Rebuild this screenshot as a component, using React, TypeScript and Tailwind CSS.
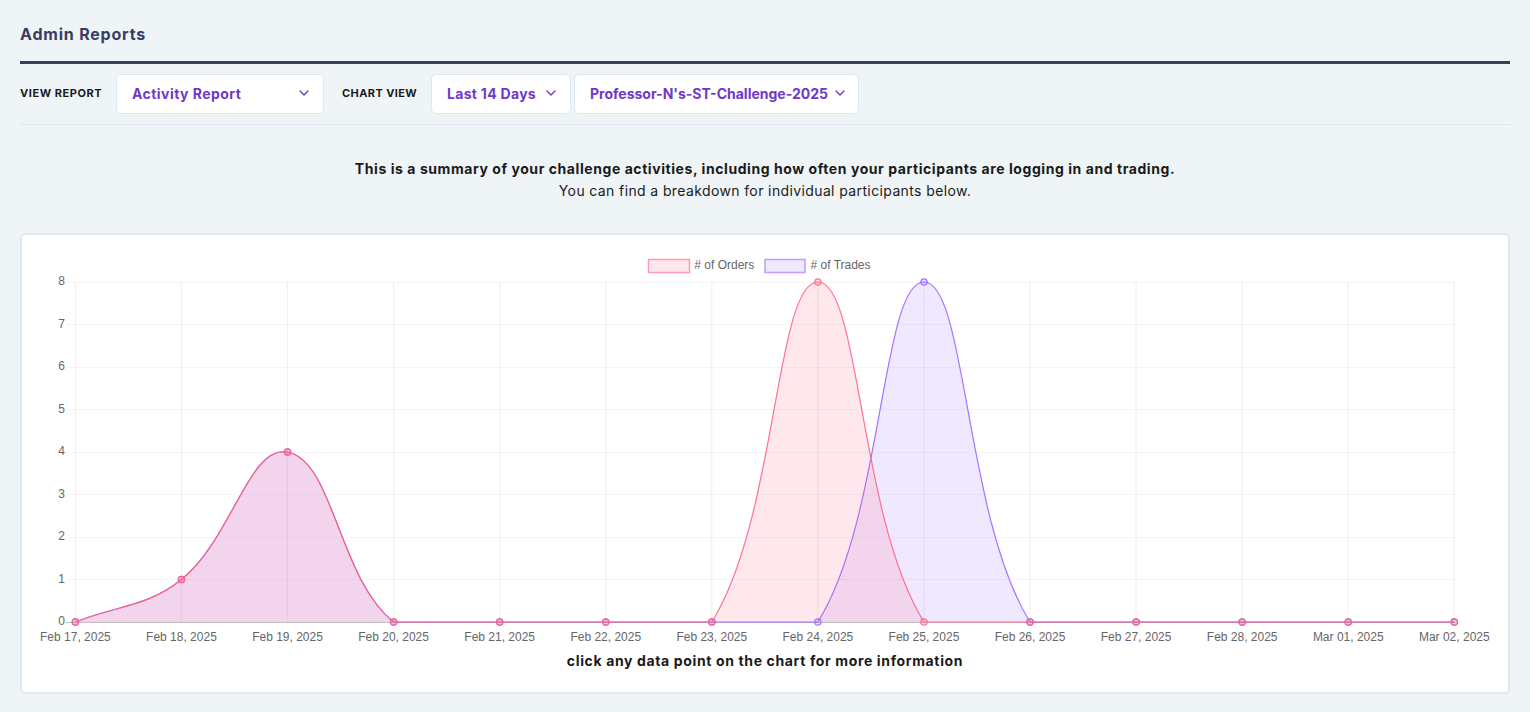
import React from 'react';
import { ChevronDown } from 'lucide-react';

const labels = [
  'Feb 17, 2025', 'Feb 18, 2025', 'Feb 19, 2025', 'Feb 20, 2025', 'Feb 21, 2025', 'Feb 22, 2025', 'Feb 23, 2025',
  'Feb 24, 2025', 'Feb 25, 2025', 'Feb 26, 2025', 'Feb 27, 2025', 'Feb 28, 2025', 'Mar 01, 2025', 'Mar 02, 2025',
];
const orders = [0, 1, 4, 0, 0, 0, 0, 8, 0, 0, 0, 0, 0, 0];
const trades = [0, 1, 4, 0, 0, 0, 0, 0, 8, 0, 0, 0, 0, 0];

const X0 = 75.4;
const STEP = 106.07;
const Y0 = 622;
const UNIT = 42.5;
const xAt = (i: number) => X0 + i * STEP;
const yAt = (v: number) => Y0 - v * UNIT;

// same spline the chart library uses (tension 0.4, control points capped to the plot area)
function linePath(data: number[]) {
  const pts = data.map((v, i) => ({ x: xAt(i), y: yAt(v) }));
  const cap = (n: number) => Math.min(Y0, Math.max(yAt(8), n));
  const ctrl = pts.map((p, i) => {
    const a = pts[i - 1] || p;
    const b = pts[i + 1] || p;
    const d01 = Math.hypot(p.x - a.x, p.y - a.y);
    const d12 = Math.hypot(b.x - p.x, b.y - p.y);
    const total = d01 + d12 || 1;
    const fa = (0.4 * d01) / total;
    const fb = (0.4 * d12) / total;
    return {
      px: p.x - fa * (b.x - a.x),
      py: cap(p.y - fa * (b.y - a.y)),
      nx: p.x + fb * (b.x - a.x),
      ny: cap(p.y + fb * (b.y - a.y)),
    };
  });
  let d = `M${pts[0].x} ${pts[0].y}`;
  for (let i = 1; i < pts.length; i++) {
    d += ` C${ctrl[i - 1].nx} ${ctrl[i - 1].ny} ${ctrl[i].px} ${ctrl[i].py} ${pts[i].x} ${pts[i].y}`;
  }
  return d;
}

function Series({ data, rgb }: { data: number[]; rgb: string }) {
  const d = linePath(data);
  return (
    <g>
      <path d={`${d} L${xAt(13)} ${Y0} L${xAt(0)} ${Y0} Z`} fill={`rgba(${rgb},0.15)`} />
      <path d={d} fill="none" stroke={`rgba(${rgb},0.9)`} strokeWidth={1.2} />
      {data.map((v, i) => (
        <circle key={i} cx={xAt(i)} cy={yAt(v)} r={3.2} fill={`rgba(${rgb},0.2)`} stroke={`rgba(${rgb},0.9)`} strokeWidth={1.2} />
      ))}
    </g>
  );
}

function Chart() {
  const ticks = [0, 1, 2, 3, 4, 5, 6, 7, 8];
  return (
    <svg viewBox="22 235 1486 410" className="block h-[410px] w-[1486px]" style={{ fontFamily: '"Liberation Sans", Arial, sans-serif' }}>
      <rect x={648.5} y={259.5} width={41} height={13} fill="rgba(255,99,132,0.15)" stroke="rgba(255,99,132,0.6)" strokeWidth={1.5} />
      <text x={694.3} y={269} fontSize={12} fill="#666">
        # of Orders
      </text>
      <rect x={765} y={259.5} width={40} height={13} fill="rgba(153,102,255,0.15)" stroke="rgba(153,102,255,0.6)" strokeWidth={1.5} />
      <text x={810.5} y={269} fontSize={12} fill="#666">
        # of Trades
      </text>

      {ticks.map((t) => (
        <g key={t}>
          <line x1={66} x2={1455} y1={Math.floor(yAt(t)) + 0.5} y2={Math.floor(yAt(t)) + 0.5} stroke={t === 0 ? 'rgba(0,0,0,0.25)' : 'rgba(0,0,0,0.04)'} />
          <text x={65} y={yAt(t) + 3} fontSize={12} fill="#666" textAnchor="end">
            {t}
          </text>
        </g>
      ))}
      {labels.map((l, i) => (
        <g key={l}>
          <line x1={xAt(i)} x2={xAt(i)} y1={yAt(8)} y2={Y0} stroke="rgba(0,0,0,0.06)" strokeWidth={1.2} />
          <text x={xAt(i)} y={641} fontSize={12} fill="#666" textAnchor="middle">
            {l}
          </text>
        </g>
      ))}

      <Series data={trades} rgb="153,102,255" />
      <Series data={orders} rgb="255,99,132" />
    </svg>
  );
}

function Select({ label, className }: { label: string; className: string }) {
  return (
    <div className={`flex h-10 items-center justify-between rounded-[5px] border border-[#dfe6f5] bg-white pb-[1px] text-[14px] font-bold text-[#6f38c9] ${className}`}>
      <span className="whitespace-nowrap">{label}</span>
      <ChevronDown size={16} strokeWidth={2} />
    </div>
  );
}

export default function App() {
  return (
    <div className="h-[712px] overflow-hidden bg-[#eff4f7] px-5" style={{ fontFamily: 'Inter, sans-serif' }}>
      <h1 className="pt-6 pb-[16px] text-[16px] leading-[21px] font-bold tracking-[0.8px] text-[#3a3c60]">Admin Reports</h1>
      <div className="h-[3px] bg-[#3a3c60]" />

      <div className="flex h-[61px] items-center border-b border-[#dfe6f5] pb-[1px]">
        <span className="w-[96px] text-[11px] font-bold tracking-[0.55px] text-[#1a1a1a]">VIEW REPORT</span>
        <Select label="Activity Report" className="w-[208px] pr-[11px] pl-[15px] tracking-[0.45px]" />
        <span className="ml-[18px] w-[89px] text-[11px] font-bold tracking-[0.4px] text-[#1a1a1a]">CHART VIEW</span>
        <Select label="Last 14 Days" className="mr-[3px] w-[140px] pr-[11px] pl-[15px] tracking-[0.3px]" />
        <Select label="Professor-N's-ST-Challenge-2025" className="w-[285px] pr-[10px] pl-[15px]" />
      </div>

      <div className="pt-[33px] text-center text-[14px] leading-[22px] text-[#1a1a1a]">
        <p className="font-bold tracking-[0.565px]">This is a summary of your challenge activities, including how often your participants are logging in and trading.</p>
        <p className="tracking-[0.38px]">You can find a breakdown for individual participants below.</p>
      </div>

      <div className="mt-[31px] h-[461px] rounded-[5px] border-2 border-[#dfe6f5] bg-white">
        <Chart />
        <p className="mt-[6px] text-center text-[14px] leading-[20px] font-bold tracking-[0.635px] text-[#1a1a1a]">click any data point on the chart for more information</p>
      </div>
    </div>
  );
}
